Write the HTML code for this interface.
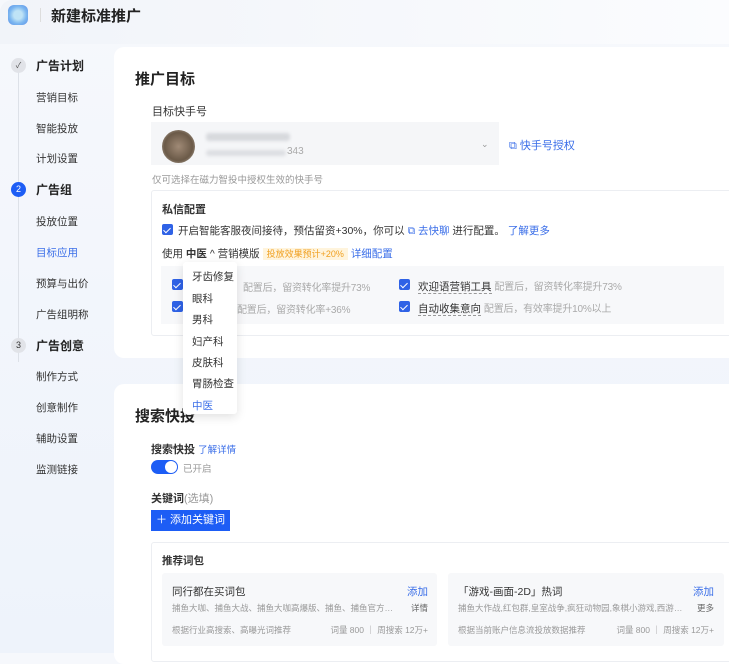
<!DOCTYPE html><html><head><meta charset="utf-8"><style>
*{margin:0;padding:0;box-sizing:border-box}
body{width:729px;height:653px;overflow:hidden;position:relative;font-family:"Liberation Sans","Noto Sans CJK SC",sans-serif;background:linear-gradient(180deg,#f6f8fc,#eef3fb);color:#222}
.a{position:absolute;white-space:nowrap}
.s{font-size:11px;color:#333}
.card{position:absolute;left:114px;right:0;background:#fff;border-radius:10px 0 0 10px}
.cb{position:absolute;width:11px;height:11px;background:#2f62e6;border-radius:2px}
.cb:after{content:"";position:absolute;left:3px;top:1.5px;width:3px;height:6px;border:solid #fff;border-width:0 1.5px 1.5px 0;transform:rotate(45deg)}
.g{color:#aaa;font-size:10px;letter-spacing:-0.2px}
.b{color:#3a6ee8}
.dd{position:absolute;left:183px;top:262px;width:54px;height:152px;background:#fff;box-shadow:0 3px 10px rgba(0,0,0,.12);border-radius:3px}
.dd div{position:absolute;left:9px;font-size:10.5px;color:#333}
.row{position:absolute;display:flex;justify-content:space-between;font-size:9px;color:#999;white-space:nowrap;overflow:hidden}
</style></head><body>
<div class="a" style="left:0;top:0;width:729px;height:44px;background:linear-gradient(90deg,#f1f4f9,#fbfcfe);border-radius:12px 0 0 0"></div>
<div class="a" style="left:8px;top:5px;width:20px;height:20px;border-radius:6px;background:radial-gradient(circle,#bfe3f6 30%,#7cb7f0 60%,#5a8fe8);"></div>
<div class="a" style="left:40px;top:8px;width:1px;height:14px;background:#ddd"></div>
<div class="a" style="left:51px;top:5px;font-size:15px;font-weight:bold;color:#222">新建标准推广</div>
<div class="a" style="left:18px;top:72px;width:1px;height:290px;background:#dde1e8"></div>
<div class="a" style="left:11px;top:58px;width:15px;height:15px;border-radius:50%;background:#e1e3e8;font-size:8px;text-align:center;line-height:15px;color:#555">✓</div>
<div class="a" style="left:11px;top:182px;width:15px;height:15px;border-radius:50%;background:#1d5df5;font-size:9px;text-align:center;line-height:15px;color:#fff">2</div>
<div class="a" style="left:11px;top:338px;width:15px;height:15px;border-radius:50%;background:#e1e3e8;font-size:9px;text-align:center;line-height:15px;color:#333">3</div>
<div class="a" style="left:36px;top:57px;font-size:12px;font-weight:bold">广告计划</div>
<div class="a" style="left:36px;top:181px;font-size:12px;font-weight:bold">广告组</div>
<div class="a" style="left:36px;top:337px;font-size:12px;font-weight:bold">广告创意</div>
<div class="a s" style="left:36px;top:90px;font-size:10.5px">营销目标</div>
<div class="a s" style="left:36px;top:121px;font-size:10.5px">智能投放</div>
<div class="a s" style="left:36px;top:151px;font-size:10.5px">计划设置</div>
<div class="a s" style="left:36px;top:214px;font-size:10.5px">投放位置</div>
<div class="a s" style="left:36px;top:245px;font-size:10.5px;color:#3a6ee8">目标应用</div>
<div class="a s" style="left:36px;top:276px;font-size:10.5px">预算与出价</div>
<div class="a s" style="left:36px;top:307px;font-size:10.5px">广告组明称</div>
<div class="a s" style="left:36px;top:369px;font-size:10.5px">制作方式</div>
<div class="a s" style="left:36px;top:400px;font-size:10.5px">创意制作</div>
<div class="a s" style="left:36px;top:431px;font-size:10.5px">辅助设置</div>
<div class="a s" style="left:36px;top:462px;font-size:10.5px">监测链接</div>
<div class="card" style="top:47px;height:311px"></div>
<div class="a" style="left:135px;top:68px;font-size:15px;font-weight:bold">推广目标</div>
<div class="a s" style="left:152px;top:103px">目标快手号</div>
<div class="a" style="left:151px;top:122px;width:348px;height:43px;background:#f5f6f8"></div>
<div class="a" style="left:162px;top:130px;width:33px;height:33px;border-radius:50%;background:radial-gradient(circle,#a08a76,#6b5a48 60%,#c9bfb4)"></div>
<div class="a" style="left:206px;top:133px;width:84px;height:8px;background:#d7d9dd;border-radius:3px;filter:blur(1.5px)"></div>
<div class="a" style="left:206px;top:150px;width:80px;height:6px;background:#dcdee2;border-radius:3px;filter:blur(1.5px)"></div>
<div class="a" style="left:287px;top:146px;font-size:10px;color:#aaa">343</div>
<div class="a" style="left:481px;top:139px;font-size:9px;color:#999">⌄</div>
<div class="a b" style="left:509px;top:137px;font-size:11px">⧉ 快手号授权</div>
<div class="a" style="left:152px;top:172px;font-size:9.5px;color:#999">仅可选择在磁力智投中授权生效的快手号</div>
<div class="a" style="left:151px;top:190px;width:590px;height:146px;border:1px solid #eceef2;border-radius:3px"></div>
<div class="a s" style="left:162px;top:201px;font-weight:bold">私信配置</div>
<div class="cb" style="left:162px;top:224px"></div>
<div class="a s" style="left:178px;top:223px;font-size:10.5px">开启智能客服夜间接待，预估留资+30%，你可以 <span class="b">⧉ 去快聊</span> 进行配置。 <span class="b">了解更多</span></div>
<div class="a s" style="left:162px;top:246px;font-size:10.5px">使用 <b>中医</b> ^ 营销模版 <span style="background:#fff4dc;color:#f0a020;font-size:9px;padding:1px 4px">投放效果预计+20%</span> <span class="b">详细配置</span></div>
<div class="a" style="left:161px;top:266px;width:563px;height:58px;background:#f7f8fa"></div>
<div class="cb" style="left:172px;top:279px"></div><div class="cb" style="left:172px;top:301px"></div>
<div class="a g" style="left:243px;top:279px">配置后，留资转化率提升73%</div>
<div class="a g" style="left:237px;top:301px">配置后，留资转化率+36%</div>
<div class="cb" style="left:399px;top:279px"></div><div class="cb" style="left:399px;top:301px"></div>
<div class="a s" style="left:418px;top:278px;font-size:10.5px"><span style="border-bottom:1px dashed #999">欢迎语营销工具</span> <span class="g">配置后，留资转化率提升73%</span></div>
<div class="a s" style="left:418px;top:300px;font-size:10.5px"><span style="border-bottom:1px dashed #999">自动收集意向</span> <span class="g">配置后，有效率提升10%以上</span></div>
<div class="card" style="top:384px;height:280px"></div>
<div class="a" style="left:135px;top:405px;font-size:15px;font-weight:bold">搜索快投</div>
<div class="a s" style="left:151px;top:441px;font-weight:bold">搜索快投 <span class="b" style="font-weight:normal;font-size:9.5px">了解详情</span></div>
<div class="a" style="left:151px;top:460px;width:27px;height:14px;border-radius:7px;background:#1d5df5"></div>
<div class="a" style="left:165px;top:461px;width:12px;height:12px;border-radius:50%;background:#fff"></div>
<div class="a" style="left:183px;top:461px;font-size:9.5px;color:#999">已开启</div>
<div class="a s" style="left:151px;top:490px;font-weight:bold">关键词<span style="font-weight:normal;color:#999">(选填)</span></div>
<div class="a" style="left:151px;top:510px;width:79px;height:21px;background:#1d5df5;color:#fff;font-size:11px;line-height:21px;text-align:center">＋ 添加关键词</div>
<div class="a" style="left:151px;top:542px;width:590px;height:120px;border:1px solid #eceef2;border-radius:3px"></div>
<div class="a s" style="left:162px;top:553px;font-weight:bold;font-size:10.5px">推荐词包</div>
<div class="a" style="left:162px;top:573px;width:275px;height:73px;background:#f7f8fa;border-radius:3px"></div>
<div class="a" style="left:448px;top:573px;width:276px;height:73px;background:#f7f8fa;border-radius:3px"></div>
<div class="row" style="left:172px;top:584px;width:256px;font-size:10.5px;color:#333"><span>同行都在买词包</span><span class="b">添加</span></div>
<div class="row" style="left:172px;top:602px;width:256px;font-size:8.5px"><span style="overflow:hidden;text-overflow:ellipsis;width:228px">捕鱼大咖、捕鱼大战、捕鱼大咖高爆版、捕鱼、捕鱼官方、快手…</span><span style="color:#666">详情</span></div>
<div class="row" style="left:172px;top:624px;width:256px;font-size:8.5px"><span>根据行业高搜索、高曝光词推荐</span><span>词量 800 ｜ 周搜索 12万+</span></div>
<div class="row" style="left:458px;top:584px;width:256px;font-size:10.5px;color:#333"><span>「游戏-画面-2D」热词</span><span class="b">添加</span></div>
<div class="row" style="left:458px;top:602px;width:256px;font-size:8.5px"><span style="overflow:hidden;text-overflow:ellipsis;width:228px">捕鱼大作战,红包群,皇室战争,疯狂动物园,象棋小游戏,西游记,…</span><span style="color:#666">更多</span></div>
<div class="row" style="left:458px;top:624px;width:256px;font-size:8.5px"><span>根据当前账户信息流投放数据推荐</span><span>词量 800 ｜ 周搜索 12万+</span></div>
<div class="dd"><div style="top:7px">牙齿修复</div><div style="top:29px">眼科</div><div style="top:50px">男科</div><div style="top:72px">妇产科</div><div style="top:93px">皮肤科</div><div style="top:114px">胃肠检查</div><div style="top:136px;color:#3a6ee8">中医</div></div>
</body></html>
